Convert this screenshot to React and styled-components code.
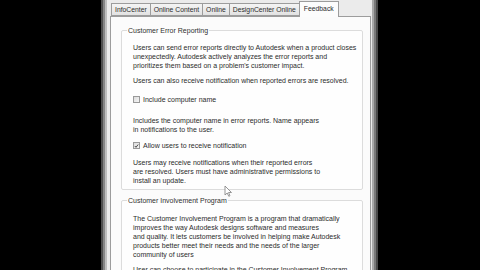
import React from "react";
import styled, {createGlobalStyle} from "styled-components";

const GlobalStyle = createGlobalStyle`
    html, body {
        margin: 0;
        padding: 0;
        background: #000;
        overflow: hidden;
    }
    body {
        width: 480px;
        height: 270px;
        font-family: "Liberation Sans", Arial, sans-serif;
    }
`;

const tabs = ["InfoCenter", "Online Content", "Online", "DesignCenter Online", "Feedback"];

const Checkbox = ({checked}) => (
    <Box>
        {checked && (
            <svg width="6" height="6" viewBox="0 0 6 6">
                <path d="M1 3 L2.4 4.6 L5 1.2" fill="none" stroke="#3a3a3a" strokeWidth="1.1" />
            </svg>
        )}
    </Box>
);

const Cursor = () => (
    <CursorWrap>
        <svg width="9" height="12" viewBox="0 0 9 12">
            <path d="M1 1 L1 10 L3.2 8 L4.8 11.3 L6 10.7 L4.5 7.5 L7.5 7.5 Z" fill="#fff" stroke="#8a8a8a" strokeWidth="0.9" />
        </svg>
    </CursorWrap>
);

const App = () => {
    return (
        <>
            <GlobalStyle />
            <Screen>
                <Frame>
                    <TabStrip>
                        {tabs.map((t) => (
                            <Tab key={t} active={t === "Feedback"}>{t}</Tab>
                        ))}
                    </TabStrip>
                    <TabPanel>
                        <Group top={8}>
                            <Legend>Customer Error Reporting</Legend>
                            <Para>
                                Users can send error reports directly to Autodesk when a product closes<br />
                                unexpectedly. Autodesk actively analyzes the error reports and<br />
                                prioritizes them based on a problem's customer impact.
                            </Para>
                            <Para>Users can also receive notification when reported errors are resolved.</Para>
                            <Option above={10} below={12}>
                                <Checkbox />
                                Include computer name
                            </Option>
                            <Para>
                                Includes the computer name in error reports. Name appears<br />
                                in notifications to the user.
                            </Para>
                            <Option above={7} below={8}>
                                <Checkbox checked />
                                Allow users to receive notification
                            </Option>
                            <Para>
                                Users may receive notifications when their reported errors<br />
                                are resolved. Users must have administrative permissions to<br />
                                install an update.
                            </Para>
                        </Group>
                        <Group top={9}>
                            <Legend>Customer Involvement Program</Legend>
                            <Para>
                                The Customer Involvement Program is a program that dramatically<br />
                                improves the way Autodesk designs software and measures<br />
                                and quality. It lets customers be involved in helping make Autodesk<br />
                                products better meet their needs and the needs of the larger<br />
                                community of users
                            </Para>
                            <Para>User can choose to participate in the Customer Involvement Program.</Para>
                        </Group>
                        <Cursor />
                    </TabPanel>
                </Frame>
            </Screen>
        </>
    );
};

export default App;

const Screen = styled.div`
    width: 480px;
    height: 270px;
    display: flex;
    padding-left: 101px;
    box-sizing: border-box;
    overflow: hidden;
`;

const Frame = styled.div`
    width: 277px;
    height: 270px;
    box-sizing: border-box;
    padding: 1px 10px 0 9px;
    display: flex;
    flex-direction: column;
    background: linear-gradient(
        to right,
        #4e4e4e 0 2px,
        #858585 2px 4px,
        #bdbdbd 4px 6px,
        #ebebeb 6px calc(100% - 6px),
        #a8a8a8 calc(100% - 6px) calc(100% - 4px),
        #7a7a7a calc(100% - 4px) calc(100% - 2px),
        #4a4a4a calc(100% - 2px)
    );
`;

const TabStrip = styled.div`
    display: flex;
    align-items: flex-end;
    height: 16px;
    padding-left: 1px;
    position: relative;
    z-index: 1;
`;

const Tab = styled.div`
    height: ${(p) => (p.active ? "16px" : "13px")};
    box-sizing: border-box;
    padding: ${(p) => (p.active ? "3px 4px 0" : "2px 3px 0")};
    margin: ${(p) => (p.active ? "0 -1px -1px -1px" : "0")};
    border: 1px solid #9c9c9c;
    border-bottom: ${(p) => (p.active ? "none" : "1px solid #9c9c9c")};
    border-left: ${(p) => (p.active ? "1px solid #9c9c9c" : "none")};
    background: ${(p) => (p.active ? "#fcfcfc" : "linear-gradient(#f4f4f4, #e2e2e2)")};
    font-size: 6.8px;
    color: #2c2c2c;
    white-space: nowrap;
    line-height: 8px;

    &:first-child {
        border-left: 1px solid #9c9c9c;
    }
`;

const TabPanel = styled.div`
    flex: 1;
    position: relative;
    background: #fbfbfb;
    border: 1px solid #9c9c9c;
    border-bottom: none;
    margin-right: -3px;
    padding: 9px 7px 0 10px;
    display: flex;
    flex-direction: column;
    gap: 6px;
`;

const Group = styled.fieldset`
    margin: 0;
    border: 1px solid #dcdcdc;
    border-radius: 2px;
    padding: ${(p) => p.top}px 4px 4px 11px;
    background: #fefefe;
`;

const Legend = styled.legend`
    font-size: 7px;
    color: #303030;
    padding: 0 1px;
    margin-left: -6px;
    line-height: 9px;
`;

const Para = styled.p`
    margin: 0 0 6px;
    font-size: 7px;
    line-height: 9px;
    color: #2c2c2c;
    white-space: nowrap;

    &:last-child {
        margin-bottom: 0;
    }
`;

const Option = styled.label`
    display: flex;
    align-items: center;
    gap: 3px;
    font-size: 7px;
    line-height: 9px;
    color: #2c2c2c;
    margin: ${(p) => p.above}px 0 ${(p) => p.below}px;
`;

const Box = styled.span`
    width: 7px;
    height: 7px;
    box-sizing: border-box;
    border: 1px solid #9a9a9a;
    background: linear-gradient(135deg, #dcdcdc, #f6f6f6);
    display: inline-flex;
    align-items: center;
    justify-content: center;
`;

const CursorWrap = styled.div`
    position: absolute;
    left: 113px;
    top: 168px;
    line-height: 0;
`;
